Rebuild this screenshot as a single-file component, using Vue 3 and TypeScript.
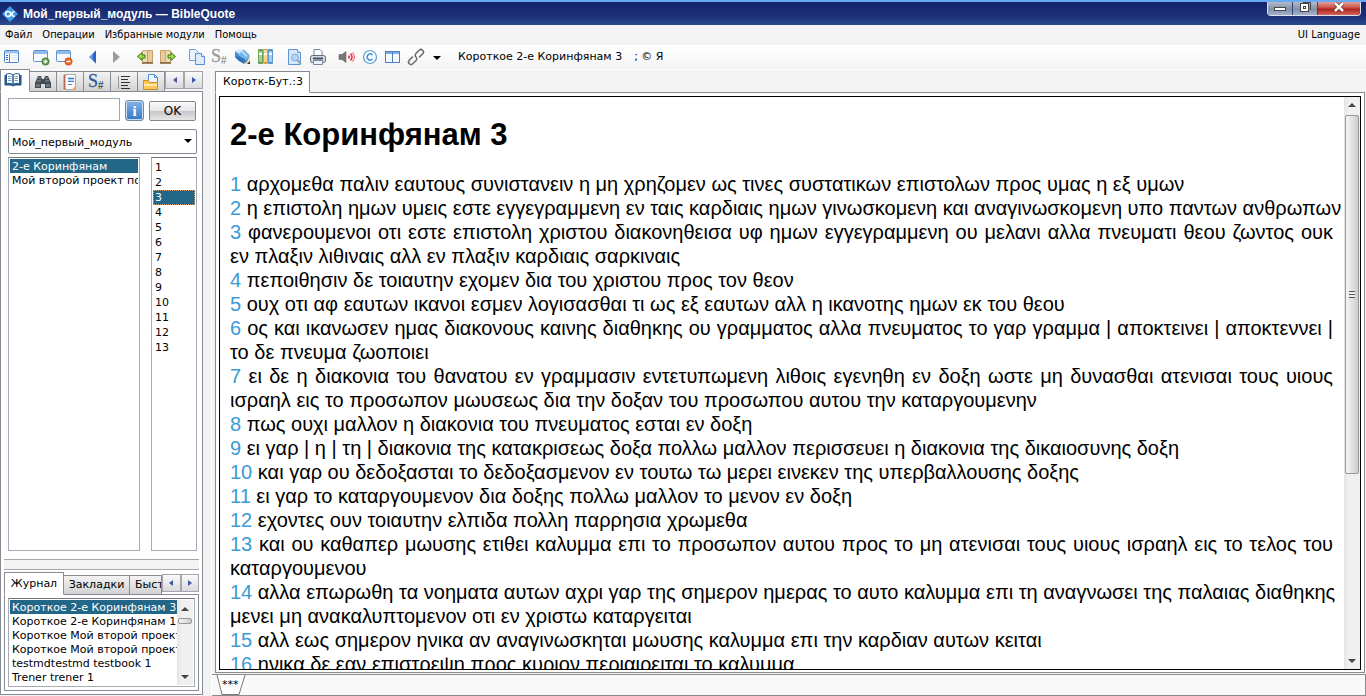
<script setup lang="ts">
import { ref } from 'vue'

interface Tool { id: string; label: string }

const toolGroups: Tool[][] = [
  [{ id: 'panel', label: 'Панель' }],
  [{ id: 'winAdd', label: 'Новая вкладка' }, { id: 'winDel', label: 'Закрыть вкладку' }],
  [{ id: 'back', label: 'Назад' }, { id: 'fwd', label: 'Вперёд' }],
  [{ id: 'prev', label: 'Предыдущая глава' }, { id: 'next', label: 'Следующая глава' }],
  [{ id: 'copy', label: 'Копировать' }, { id: 'strongGrey', label: 'Номера Стронга' }, { id: 'pencil', label: 'Заметка' }, { id: 'books', label: 'Модули' }],
  [{ id: 'preview', label: 'Просмотр' }, { id: 'print', label: 'Печать' }],
  [{ id: 'sound', label: 'Звук' }, { id: 'copyright', label: 'Авторские права' }, { id: 'columns', label: 'Колонки' }, { id: 'link', label: 'Ссылки' }],
]

const icons: Record<string, string> = {
  panel: '<rect x="1.5" y="2.5" width="14" height="12" rx="1" fill="#fff" stroke="#4b84c9"/><path d="M2 3h13v2.500h-13z" fill="#9cc2ee"/><path d="M6.500 6v8" stroke="#4b84c9"/><path d="M3 7.500h2M3 9.500h2M3 11.500h2" stroke="#2f6fc4"/><path d="M8 7.500h6M8 9.500h6M8 11.500h6" stroke="#dbe7f6"/>',
  winAdd: '<rect x="1.500" y="2.500" width="14" height="11" rx="1" fill="#f4f9ff" stroke="#5c91d2"/><path d="M2 3h13v3h-13z" fill="#8fb9ea"/><circle cx="13.500" cy="13.500" r="3.700" fill="#5a9648" stroke="#3f7433" stroke-width=".6"/><path d="M11.500 13.500h4M13.500 11.500v4" stroke="#fff" stroke-width="1.400"/>',
  winDel: '<rect x="1.500" y="2.500" width="14" height="11" rx="1" fill="#f4f9ff" stroke="#5c91d2"/><path d="M2 3h13v3h-13z" fill="#8fb9ea"/><circle cx="13.500" cy="13.500" r="3.700" fill="#ec641e" stroke="#c94710" stroke-width=".6"/><path d="M11.500 13.500h4" stroke="#fff" stroke-width="1.500"/>',
  back: '<path d="M12 2.500v13L5 9z" fill="#5b96e6"/><path d="M12 2.500v13L9 12V5.500z" fill="#2a64c0"/>',
  fwd: '<path d="M6 3v12l7-6z" fill="#9b9b9b"/>',
  prev: '<path d="M6.500 2.500h5v12h-5z" fill="#f0dab4" stroke="#d0ab76"/><path d="M11.500 2.500h5v12h-5z" fill="#e9cb9a" stroke="#c89f68"/><path d="M6 15h11" stroke="#7d5c34" stroke-width="1.500"/><path d="M1.500 8.500L6 4.500V7h3v3H6v2.500z" fill="#a5d84a" stroke="#39801c"/>',
  next: '<path d="M1.500 2.500h5v12h-5z" fill="#e9cb9a" stroke="#c89f68"/><path d="M6.500 2.500h5v12h-5z" fill="#f0dab4" stroke="#d0ab76"/><path d="M1 15h11" stroke="#7d5c34" stroke-width="1.500"/><path d="M16.500 8.500L12 4.500V7H9v3h3v2.500z" fill="#a5d84a" stroke="#39801c"/>',
  copy: '<path d="M1.500 1.500h6l3 3v8h-9z" fill="#eaf3fe" stroke="#6b9fdc"/><path d="M7.500 5.500h6l3 3v8h-9z" fill="#dceafb" stroke="#5a90d2"/><path d="M13.500 5.500v3h3" fill="#fff" stroke="#5a90d2"/>',
  strongGrey: '<text x="0" y="14" font-family="Liberation Serif, serif" font-size="18" fill="#999" stroke="#999" stroke-width=".3">S</text><text x="10" y="16" font-family="Liberation Sans, sans-serif" font-size="10" fill="#777">#</text>',
  pencil: '<path d="M1 3l4-1.500h5L5 6z" fill="#cbe6f8"/><path d="M1 3l4 3v7L1 9z" fill="#4a94d6"/><path d="M5 6l5-4.500 6 6-5 5.500H5z" fill="#6fb6ea"/><path d="M8 3.500l5 5" stroke="#cbe6f8" stroke-width="1.500"/><path d="M1 9l4 4 5 3 2-4-7-4z" fill="#2f74ba"/><path d="M16 7.500V16h-6z" fill="#f1dcb0"/><path d="M10 16l2-4 4-4.500-3 6z" fill="#4f8fc6"/><path d="M16 13v3h-3z" fill="#334"/>',
  books: '<path d="M1.500 1.500h4v14h-4z" fill="#a9cf94" stroke="#73a35c"/><path d="M6.500 1.500h4v14h-4z" fill="#f9d78c" stroke="#d8a24a"/><path d="M11.500 1.500h4v14h-4z" fill="#a8cdf2" stroke="#5f97d2"/><path d="M2 2.500h3M12 2.500h3" stroke="#4a8f80"/><path d="M2 6h3M7 6h3M12 6h3" stroke="#fff" stroke-width="2"/><path d="M2 14.500h3" stroke="#5f9448"/><path d="M7 14.500h3" stroke="#e0a030"/><path d="M12 14.500h3" stroke="#4d86c6"/>',
  preview: '<path d="M2.500 1.500h9l3 3v12h-12z" fill="#d7e8fb" stroke="#5d94d6"/><path d="M11.500 1.500v3h3" fill="#fff" stroke="#5d94d6"/><circle cx="9" cy="9.500" r="3.500" fill="#b6d6f6" stroke="#7da6d3"/><path d="M11.500 12l3.500 4" stroke="#91a4bb" stroke-width="2"/>',
  print: '<path d="M5 7V1.500h6l2 2V7" fill="#fff" stroke="#75869a"/><rect x="1.500" y="7.500" width="15" height="7" rx="2" fill="#d5dae0" stroke="#5e6873"/><path d="M4 10.500h10" stroke="#48525e" stroke-width="2"/><path d="M4.500 12.500h9v4h-9z" fill="#e9f2fc" stroke="#73899f"/>',
  sound: '<path d="M1 6.500h3l4-3v11l-4-3H1z" fill="#777" stroke="#555" stroke-width=".5"/><path d="M10.500 7.500q1.500 1.500 0 3" stroke="#e53040" stroke-width="1.500" fill="none"/><path d="M12.500 5.500q3 3.500 0 7" stroke="#ee2a3a" stroke-width="1.500" fill="none"/><path d="M14.500 4.500q4 4.500 0 9" stroke="#f27580" stroke-width="1.200" fill="none"/>',
  copyright: '<circle cx="9" cy="9" r="6.500" fill="#f4faff" stroke="#5c9fd8" stroke-width="1.200"/><path d="M11.500 7q-2.500-2.500-4.500 0t0 4q2 2.500 4.500 0" fill="none" stroke="#4a8dcc" stroke-width="1.500"/>',
  columns: '<rect x="1.500" y="3.500" width="14" height="11" fill="#f6faff" stroke="#4b7fc3"/><path d="M2 4h13v2H2z" fill="#80ade3"/><path d="M8.500 4v10" stroke="#4b7fc3"/>',
  link: '<g transform="rotate(-45 9 9)" fill="none" stroke="#6d6d6d" stroke-width="1.500"><path d="M7 6.500H2a2.500 2.500 0 0 0 0 5h5a2.500 2.500 0 0 0 2-2.500"/><path d="M11 11.500h5a2.500 2.500 0 0 0 0-5h-5A2.500 2.500 0 0 0 9 9"/></g>',
  book: '<path d="M1 4v10h6l2 1 2-1h6V4" fill="#2c62a0" stroke="#1d4a80"/><path d="M2.500 3q4-1.500 6.500 1v9.500q-2.500-2-6.500-1zM15.500 3q-4-1.500-6.500 1v9.500q2.500-2 6.500-1z" fill="#fff" stroke="#285a92"/><path d="M4 5.500h3.500M4 7.500h3.500M4 9.500h3.500M10.500 5.500H14M10.500 7.500H14M10.500 9.500H14" stroke="#7c9abd"/>',
  search: '<path d="M4 3h3l1 3h2l1-3h3l3 7v5h-6v-4H7v4H1v-5z" fill="#424a52"/><path d="M4 5h3M11 5h3M3 8h4M11 8h4" stroke="#8d979f"/><rect x="2" y="11" width="4" height="3" fill="#657784"/><rect x="12" y="11" width="4" height="3" fill="#657784"/>',
  note: '<path d="M3.500 1.500h11v15h-11z" fill="#fbfbfb" stroke="#aaa"/><path d="M3.500 2v14" stroke="#bd5138" stroke-width="2" stroke-dasharray="1.500 .6"/><path d="M7 4h6v4H7z" fill="#b6cff2"/><path d="M7 5.500h6M7 8.500h6M7 11.500h4" stroke="#5281c4"/><path d="M11 17l4-5v5z" fill="#f4a14c"/>',
  strong: '<text x="0" y="14" font-family="Liberation Serif, serif" font-size="18" fill="#2e5c96" stroke="#2e5c96" stroke-width=".3">S</text><text x="10" y="16" font-family="Liberation Sans, sans-serif" font-size="10" fill="#111">#</text>',
  lines: '<path d="M6 3.500h9M6 6.500h7M6 9.500h9M6 12.500h7M6 15.500h9" stroke="#333"/><path d="M3.500 3v13" stroke="#999"/>',
  folder: '<path d="M6.500 1.500h6l3 3v8h-9z" fill="#eef6ff" stroke="#4f8dd6"/><path d="M12.500 1.500v3h3" fill="none" stroke="#4f8dd6"/><path d="M1.500 7.500h5l1 2h8v7h-14z" fill="#fbc958" stroke="#d38d1d"/><path d="M2 12h13" stroke="#ffe9a8" stroke-width="2"/>',
}

const sideTabs: Tool[] = [
  { id: 'book', label: 'Книги' },
  { id: 'search', label: 'Поиск' },
  { id: 'note', label: 'Словари' },
  { id: 'strong', label: 'Стронг' },
  { id: 'lines', label: 'Комментарии' },
  { id: 'folder', label: 'Документы' },
]

const menu = ['Файл', 'Операции', 'Избранные модули', 'Помощь']
const books = ['2-е Коринфянам', 'Мой второй проект по созданию']
const journal = [
  'Короткое 2-е Коринфянам 3',
  'Короткое 2-е Коринфянам 1',
  'Короткое Мой второй проект',
  'Короткое Мой второй проект',
  'testmdtestmd testbook 1',
  'Trener trener 1',
]
const verses: string[][] = [
  ['αρχομεθα παλιν εαυτους συνιστανειν η μη χρηζομεν ως τινες συστατικων επιστολων προς υμας η εξ υμων'],
  ['η επιστολη ημων υμεις εστε εγγεγραμμενη εν ταις καρδιαις ημων γινωσκομενη και αναγινωσκομενη υπο παντων ανθρωπων'],
  ['φανερουμενοι οτι εστε επιστολη χριστου διακονηθεισα υφ ημων εγγεγραμμενη ου μελανι αλλα πνευματι θεου ζωντος ουκ', 'εν πλαξιν λιθιναις αλλ εν πλαξιν καρδιαις σαρκιναις'],
  ['πεποιθησιν δε τοιαυτην εχομεν δια του χριστου προς τον θεον'],
  ['ουχ οτι αφ εαυτων ικανοι εσμεν λογισασθαι τι ως εξ εαυτων αλλ η ικανοτης ημων εκ του θεου'],
  ['ος και ικανωσεν ημας διακονους καινης διαθηκης ου γραμματος αλλα πνευματος το γαρ γραμμα | αποκτεινει | αποκτεννει |', 'το δε πνευμα ζωοποιει'],
  ['ει δε η διακονια του θανατου εν γραμμασιν εντετυπωμενη λιθοις εγενηθη εν δοξη ωστε μη δυνασθαι ατενισαι τους υιους', 'ισραηλ εις το προσωπον μωυσεως δια την δοξαν του προσωπου αυτου την καταργουμενην'],
  ['πως ουχι μαλλον η διακονια του πνευματος εσται εν δοξη'],
  ['ει γαρ | η | τη | διακονια της κατακρισεως δοξα πολλω μαλλον περισσευει η διακονια της δικαιοσυνης δοξη'],
  ['και γαρ ου δεδοξασται το δεδοξασμενον εν τουτω τω μερει εινεκεν της υπερβαλλουσης δοξης'],
  ['ει γαρ το καταργουμενον δια δοξης πολλω μαλλον το μενον εν δοξη'],
  ['εχοντες ουν τοιαυτην ελπιδα πολλη παρρησια χρωμεθα'],
  ['και ου καθαπερ μωυσης ετιθει καλυμμα επι το προσωπον αυτου προς το μη ατενισαι τους υιους ισραηλ εις το τελος του', 'καταργουμενου'],
  ['αλλα επωρωθη τα νοηματα αυτων αχρι γαρ της σημερον ημερας το αυτο καλυμμα επι τη αναγνωσει της παλαιας διαθηκης', 'μενει μη ανακαλυπτομενον οτι εν χριστω καταργειται'],
  ['αλλ εως σημερον ηνικα αν αναγινωσκηται μωυσης καλυμμα επι την καρδιαν αυτων κειται'],
  ['ηνικα δε εαν επιστρεψη προς κυριον περιαιρειται το καλυμμα'],
]

const query = ref('')
const module = ref('Мой_первый_модуль')
const book = ref(0)
const chapter = ref(3)
const entry = ref(0)
</script>

<template>
  <div class="window">
    <header class="titlebar">
      <svg class="logo" viewBox="0 0 16 16" aria-hidden="true">
        <path d="M8 0l8 8-8 8-8-8z" fill="#3e9be6" />
        <path d="M12.500 5.500q-1.500 0-3 2.500t-3.500 2.500a2.500 2.500 0 0 1 0-5q2 0 3.500 2.500t3 2.500" fill="none" stroke="#fff" stroke-width="1.600" />
      </svg>
      <h1 class="caption">Мой_первый_модуль — BibleQuote</h1>
      <div class="winbuttons">
        <button type="button" class="wb" aria-label="Свернуть">
          <svg width="14" height="12" viewBox="0 0 14 12"><rect x="1.500" y="5.500" width="11" height="3" fill="#fff" stroke="#444" /></svg>
        </button>
        <button type="button" class="wb" aria-label="Восстановить">
          <svg width="14" height="12" viewBox="0 0 14 12"><path d="M5 .5h7.500V8" fill="none" stroke="#444" /><rect x="2.500" y="1.500" width="8" height="8" fill="#fff" stroke="#444" /><rect x="5.500" y="4.500" width="2" height="2" fill="#fff" stroke="#444" /></svg>
        </button>
        <button type="button" class="wb close" aria-label="Закрыть">
          <svg width="14" height="12" viewBox="0 0 14 12"><path d="M3 1l8 8M11 1l-8 8" stroke="#6b2020" stroke-width="4" /><path d="M3 1l8 8M11 1l-8 8" stroke="#fff" stroke-width="2.500" /></svg>
        </button>
      </div>
    </header>

    <nav class="menubar">
      <button v-for="m in menu" :key="m" type="button">{{ m }}</button>
      <button type="button" class="lang">UI Language</button>
    </nav>

    <div class="toolbar">
      <div v-for="(g, i) in toolGroups" :key="i" class="group">
        <button v-for="t in g" :key="t.id" type="button" :aria-label="t.label">
          <svg width="18" height="18" viewBox="0 0 18 18" v-html="icons[t.id]"></svg>
        </button>
      </div>
      <button type="button" class="drop" aria-label="Ещё"><svg width="8" height="4" viewBox="0 0 8 4"><path d="M0 0h8L4 4z" /></svg></button>
      <span class="place">Короткое 2-е Коринфянам 3</span>
      <span class="rights">; © Я</span>
    </div>

    <div class="body">
      <aside class="side">
        <div class="tabs icontabs">
          <button v-for="(t, i) in sideTabs" :key="t.id" type="button" class="tab" :class="{ active: i === 0 }" :aria-label="t.label">
            <svg width="18" height="18" viewBox="0 0 18 18" v-html="icons[t.id]"></svg>
          </button>
          <div class="arrows">
            <button type="button" aria-label="Влево"><svg width="4" height="6" viewBox="0 0 4 6"><path d="M4 0v6L0 3z" /></svg></button>
            <button type="button" aria-label="Вправо"><svg width="4" height="6" viewBox="0 0 4 6"><path d="M0 0v6l4-3z" /></svg></button>
          </div>
        </div>
        <div class="page">
          <div class="searchrow">
            <input v-model="query" type="text" aria-label="Адрес" />
            <button type="button" class="info" aria-label="Справка">i</button>
            <button type="button" class="ok">OK</button>
          </div>
          <div class="combo">
            <select v-model="module" aria-label="Модуль"><option>Мой_первый_модуль</option></select>
            <svg width="8" height="4" viewBox="0 0 8 4"><path d="M0 0h8L4 4z" /></svg>
          </div>
          <div class="lists">
            <div class="list books">
              <button v-for="(b, i) in books" :key="b" type="button" :class="{ sel: i === book }" @click="book = i">{{ b }}</button>
            </div>
            <div class="list chapters">
              <button v-for="n in 13" :key="n" type="button" :class="{ sel: n === chapter }" @click="chapter = n">{{ n }}</button>
            </div>
          </div>
          <div class="splitter"></div>
          <section class="history">
            <div class="tabs texttabs">
              <button type="button" class="tab active">Журнал</button>
              <button type="button" class="tab">Закладки</button>
              <button type="button" class="tab cut">Быстрый</button>
              <div class="arrows">
                <button type="button" aria-label="Влево"><svg width="4" height="6" viewBox="0 0 4 6"><path d="M4 0v6L0 3z" /></svg></button>
                <button type="button" aria-label="Вправо"><svg width="4" height="6" viewBox="0 0 4 6"><path d="M0 0v6l4-3z" /></svg></button>
              </div>
            </div>
            <div class="historypage">
              <div class="list journal">
                <div class="rows">
                  <button v-for="(j, i) in journal" :key="i" type="button" :class="{ sel: i === entry }" @click="entry = i">{{ j }}</button>
                </div>
                <div class="scroll">
                  <svg width="8" height="4" viewBox="0 0 8 4"><path d="M0 4h8L4 0z" /></svg>
                  <div class="thumb small"></div>
                  <svg class="down" width="8" height="4" viewBox="0 0 8 4"><path d="M0 0h8L4 4z" /></svg>
                </div>
              </div>
            </div>
          </section>
        </div>
      </aside>

      <div class="gutter"></div>

      <main class="reader">
        <div class="doctabs"><button type="button" class="doctab">Коротк-Бут.:3</button></div>
        <div class="frame">
          <div class="sheet">
            <article>
              <h2>2-е Коринфянам 3</h2>
              <p v-for="(lines, i) in verses" :key="i">
                <span v-for="(line, k) in lines" :key="k" class="line"><a v-if="k === 0" href="#">{{ i + 1 }}</a>{{ k === 0 ? ' ' + line : line }}</span>
              </p>
            </article>
            <div class="scroll">
              <svg width="8" height="4" viewBox="0 0 8 4"><path d="M0 4h8L4 0z" /></svg>
              <div class="track">
                <div class="thumb"><i></i></div>
              </div>
              <svg class="down" width="8" height="4" viewBox="0 0 8 4"><path d="M0 0h8L4 4z" /></svg>
            </div>
          </div>
        </div>
        <footer class="foot">
          <svg width="30" height="20" viewBox="0 0 30 20" aria-hidden="true"><path d="M1 0l5 19.500h17L29 0" fill="#fff" stroke="#777" /></svg>
          <button type="button">***</button>
        </footer>
      </main>
    </div>
  </div>
</template>

<style>
body {
  background: #f3f3f3;
  overflow: hidden;
}
</style>

<style scoped>
* {
  box-sizing: border-box;
}
button {
  border: 0;
  padding: 0;
  margin: 0;
  background: none;
  font: inherit;
  color: inherit;
}
svg {
  display: block;
  flex: none;
  overflow: visible;
}
.window {
  display: flex;
  flex-direction: column;
  height: 100vh;
  background: #f3f3f3;
  color: #000;
  font: 11px/14px "DejaVu Sans", sans-serif;
}
.titlebar {
  display: flex;
  align-items: center;
  height: 25px;
  flex: none;
  padding: 0 5px 0 2px;
  border-top: 2px solid #69aaf5;
  background: linear-gradient(#14246c, #1b3078 60%, #2c4a90);
}
.logo {
  width: 16px;
  height: 16px;
}
.caption {
  flex: 1;
  margin: 0 0 0 5px;
  color: #fff;
  font: bold 12px/16px "Liberation Sans", sans-serif;
}
.winbuttons {
  display: flex;
  align-self: flex-start;
  height: 14px;
  border: 1px solid #dbe2ee;
  border-top: 0;
  border-radius: 0 0 4px 4px;
  overflow: hidden;
}
.wb {
  width: 25px;
  display: flex;
  justify-content: center;
  background: linear-gradient(#b4bbc9, #8290ab 55%, #a5b2c9);
  border-right: 1px solid #36456e;
}
.wb.close {
  width: 42px;
  border: 0;
  background: linear-gradient(#e2a49c, #cb4c40 45%, #aa231c 55%, #d4655a);
}
.menubar {
  display: flex;
  align-items: center;
  height: 20px;
  flex: none;
  padding: 0 6px 0 5px;
  gap: 10px;
  font-family: "DejaVu Sans Condensed", "DejaVu Sans", sans-serif;
}
.lang {
  margin-left: auto;
}
.toolbar {
  display: flex;
  align-items: center;
  height: 25px;
  flex: none;
  background: linear-gradient(#fff, #f3f3f3);
  border-bottom: 1px solid #fff;
}
.group {
  display: flex;
  margin-right: 6px;
}
.group button {
  display: flex;
  justify-content: center;
  width: 23px;
}
.drop {
  display: flex;
  justify-content: center;
  width: 8px;
  padding-top: 2px;
}
.place {
  margin-left: 17px;
}
.rights {
  margin-left: 12px;
}
.body {
  display: flex;
  flex: 1;
  min-height: 0;
}
.side {
  display: flex;
  flex-direction: column;
  width: 203px;
  flex: none;
}
.tabs {
  display: flex;
  align-items: flex-end;
  flex: none;
  position: relative;
  z-index: 1;
}
.icontabs {
  height: 23px;
  margin: -1px 0;
}
.tab {
  height: 21px;
  border: 1px solid #868b94;
  border-left-width: 0;
  background: linear-gradient(#f3f3f3, #d2d2d2);
  flex: none;
}
.icontabs .tab {
  display: flex;
  align-items: center;
  justify-content: center;
  width: 27px;
}
.icontabs .tab.active {
  width: 30px;
  height: 23px;
  padding: 0 5px 2px 0;
}
.tab.active {
  background: #fff;
  border-left-width: 1px;
  border-bottom-color: #fff;
}
.arrows {
  display: flex;
  align-self: flex-start;
  margin-top: 2px;
  flex: 1;
}
.arrows button {
  display: flex;
  align-items: center;
  justify-content: center;
  flex: 1;
  height: 18px;
  border: 1px solid #a5a5ad;
  background: linear-gradient(#fafafa, #dadade);
  fill: #4456a4;
}
.page {
  display: flex;
  flex-direction: column;
  flex: 1;
  min-height: 0;
  border: 1px solid #868b94;
  margin-bottom: 1px;
  background: #fff;
  padding: 6px 3px 3px;
}
.searchrow {
  display: flex;
  align-items: center;
  gap: 5px;
  padding: 0 3px 0 4px;
}
.searchrow input {
  flex: 1;
  min-width: 0;
  height: 23px;
  border: 1px solid #a3a7ae;
  background: #fff;
  font: inherit;
}
.info {
  width: 19px;
  height: 21px;
  margin-top: 2px;
  border: 1px solid #76899f;
  border-radius: 3px;
  box-shadow: inset 0 0 0 1px #c5ddf5;
  background: linear-gradient(#83b4e8, #3678c4);
  color: #fff;
  font: bold 15px/18px "Liberation Serif", serif;
}
.ok {
  width: 47px;
  height: 20px;
  margin-top: 2px;
  border: 1px solid #85858b;
  border-radius: 2px;
  background: linear-gradient(#fafafa, #e6e6e6 50%, #c7c7cc 52%, #e7e7e7);
  font-size: 12px;
}
.combo {
  position: relative;
  margin: 8px 2px 0 4px;
}
.combo select {
  display: block;
  appearance: none;
  width: 100%;
  height: 25px;
  border: 1px solid #84898f;
  border-radius: 2px;
  background: #fff;
  padding: 2px 3px 0;
  font: inherit;
  color: #000;
}
.combo svg {
  position: absolute;
  right: 5px;
  top: 10px;
}
.lists {
  display: flex;
  justify-content: space-between;
  flex: 1;
  min-height: 0;
  margin: 3px 2px 0 4px;
}
.list {
  border: 1px solid #a8acb2;
  border-top-color: #73777d;
  background: #fff;
  overflow: hidden;
  padding: 1px;
}
.list button {
  display: block;
  width: 100%;
  height: 14px;
  padding-left: 2px;
  text-align: left;
  line-height: 16px;
  white-space: nowrap;
  overflow: hidden;
}
.list button.sel {
  background: #226688;
  color: #fff;
}
.books {
  width: 132px;
}
.chapters {
  width: 46px;
  padding-top: 2px;
}
.list.chapters button {
  height: 15px;
}
.chapters button.sel {
  outline: 1px dotted #d99a66;
  outline-offset: -1px;
}
.splitter {
  flex: none;
  height: 11px;
  margin-top: 8px;
  border: solid #a8a8a8;
  border-width: 1px 0;
  background: #f3f3f3;
}
.history {
  flex: none;
  margin-top: 2px;
}
.texttabs {
  height: 23px;
  margin-bottom: -1px;
  overflow: hidden;
}
.texttabs .tab {
  width: 66px;
  height: 20px;
}
.texttabs .tab.active {
  width: 60px;
  height: 23px;
}
.texttabs .tab.cut {
  width: 32px;
  padding-left: 5px;
  overflow: hidden;
  text-align: left;
}
.historypage {
  border: 1px solid #868b94;
  padding: 3px;
  background: #fff;
}
.journal {
  display: flex;
}
.rows {
  flex: 1;
  min-width: 0;
}
.scroll {
  display: flex;
  flex-direction: column;
  align-items: center;
  width: 16px;
  flex: none;
  padding: 7px 0 6px;
  background: linear-gradient(90deg, #e5e5e5, #f0f0f0 30%, #f0f0f0);
  fill: #444;
}
.thumb {
  width: 14px;
  border: 1px solid #979797;
  border-radius: 2px;
  background: linear-gradient(90deg, #f5f5f5, #e2e2e2 50%, #cbcbcb);
}
.thumb.small {
  height: 6px;
  margin-top: 7px;
}
.journal .scroll {
  height: 85px;
}
.down {
  margin-top: auto;
}
.gutter {
  width: 9px;
  flex: none;
  border: solid #fff;
  border-width: 0 1px 0 0;
}
.reader {
  display: flex;
  flex-direction: column;
  flex: 1;
  min-width: 0;
}
.doctabs {
  height: 23px;
  flex: none;
  padding: 1px 0 0 3px;
  margin-bottom: -1px;
  position: relative;
  z-index: 1;
}
.doctab {
  height: 22px;
  padding: 0 6px 0 7px;
  border: 1px solid #868b94;
  border-bottom-color: #fff;
  background: #fff;
  white-space: nowrap;
}
.frame {
  display: flex;
  flex: 1;
  min-height: 0;
  margin: 0 1px 0 3px;
  border: 1px solid #868b94;
  padding: 3px 3px 2px;
  background: #fff;
}
.sheet {
  display: flex;
  flex: 1;
  min-width: 0;
  border: 1px solid #000;
}
article {
  flex: 1;
  min-width: 0;
  overflow: hidden;
  padding: 0 11px 0 10px;
  font: 20px/24px "Liberation Sans", sans-serif;
}
h2 {
  margin: 19px 0 18px;
  font: bold 31px/38px "Liberation Sans", sans-serif;
}
p {
  margin: 0;
}
.line {
  display: block;
  white-space: nowrap;
}
.line:not(:last-child) {
  text-align: justify;
  text-align-last: justify;
}
p a {
  color: #3a9bd5;
  text-decoration: none;
}
.sheet .scroll {
  padding: 6px 0;
}
.track {
  display: flex;
  justify-content: center;
  flex: 1;
  padding: 8px 0;
}
.track .thumb {
  display: flex;
  align-items: center;
  justify-content: center;
  height: 67%;
}
.thumb i {
  width: 6px;
  height: 7px;
  background: repeating-linear-gradient(#555 0 1px, #eee 1px 3px);
}
.foot {
  position: relative;
  flex: none;
  height: 22px;
  margin-top: 1px;
  padding-left: 4px;
  border: solid #8b8b8b;
  border-width: 1px 1px 1px 0;
  background: #f9f9f9;
}
.foot button {
  position: absolute;
  left: 10px;
  top: 3px;
}
</style>
